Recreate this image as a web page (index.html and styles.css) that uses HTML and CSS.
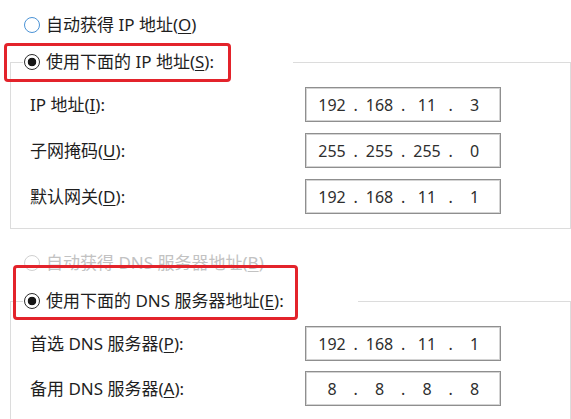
FILE: index.html
```html
<!DOCTYPE html>
<html lang="zh-CN">
<head>
<meta charset="utf-8">
<title>IP 设置</title>
<link rel="stylesheet" href="styles.css">
</head>
<body>
<div class="page">
  <div class="opt opt-top"><span class="radio radio-hover"></span><span class="opt-text">自动获得 IP 地址(<u>O</u>)</span></div>

  <fieldset class="group group-ip">
    <legend class="legend legend-ip"><div class="opt"><span class="radio radio-on"></span><span class="opt-text">使用下面的 IP 地址(<u>S</u>):</span></div></legend>
    <div class="rows rows-ip">
      <div class="row"><span class="label">IP 地址(<u>I</u>):</span>
        <div class="ip"><span>192</span><span>.</span><span>168</span><span>.</span><span>11</span><span>.</span><span>3</span></div></div>
      <div class="row"><span class="label">子网掩码(<u>U</u>):</span>
        <div class="ip"><span>255</span><span>.</span><span>255</span><span>.</span><span>255</span><span>.</span><span>0</span></div></div>
      <div class="row"><span class="label">默认网关(<u>D</u>):</span>
        <div class="ip"><span>192</span><span>.</span><span>168</span><span>.</span><span>11</span><span>.</span><span>1</span></div></div>
    </div>
  </fieldset>

  <div class="opt opt-dns-auto"><span class="radio radio-off"></span><span class="opt-text disabled">自动获得 DNS 服务器地址(<u>B</u>)</span></div>

  <fieldset class="group group-dns">
    <legend class="legend legend-dns"><div class="opt"><span class="radio radio-on"></span><span class="opt-text">使用下面的 DNS 服务器地址(<u>E</u>):</span></div></legend>
    <div class="rows rows-dns">
      <div class="row"><span class="label">首选 DNS 服务器(<u>P</u>):</span>
        <div class="ip"><span>192</span><span>.</span><span>168</span><span>.</span><span>11</span><span>.</span><span>1</span></div></div>
      <div class="row"><span class="label">备用 DNS 服务器(<u>A</u>):</span>
        <div class="ip"><span>8</span><span>.</span><span>8</span><span>.</span><span>8</span><span>.</span><span>8</span></div></div>
    </div>
  </fieldset>

  <div class="mark mark-ip"></div>
  <div class="mark mark-dns"></div>
</div>
</body>
</html>
```
FILE: styles.css
```css
html, body {
  margin: 0;
  padding: 0;
  background: #ffffff;
}

.page {
  position: relative;
  width: 571px;
  height: 419px;
  overflow: hidden;
  padding-top: 15px;
  box-sizing: border-box;
  font-family: "Noto Sans", "Noto Sans CJK SC", sans-serif;
  font-size: 17px;
  line-height: 20px;
  color: #1e1e1e;
}

u {
  text-decoration: underline;
  text-underline-offset: 2px;
  text-decoration-thickness: 1px;
}

.opt {
  display: flex;
  align-items: center;
  height: 20px;
  white-space: nowrap;
}

.opt-top {
  padding-left: 24px;
}

.opt-dns-auto {
  padding-left: 24px;
  margin-top: 24px;
}

.opt-text {
  margin-left: 6px;
}

.opt-text.disabled {
  color: #c2c2c2;
}

.radio {
  width: 16px;
  height: 16px;
  border-radius: 50%;
  box-sizing: border-box;
  flex: 0 0 auto;
}

.radio-hover {
  border: 1.5px solid #4b93d6;
  background: #fff;
}

.radio-on {
  border: 1px solid #2b2b2b;
  background: radial-gradient(circle, #161616 0 4px, #ffffff 4.6px);
}

.radio-off {
  border: 1px solid #d0d0d0;
  background: #fff;
}

.group {
  margin: 0 0 0 10px;
  padding: 0 0 0 12px;
  border: 1px solid #dcdcdc;
  min-inline-size: 0;
}

.group-ip {
  margin-top: 17px;
}

.group-dns {
  margin-top: 18px;
}

.legend {
  padding: 0;
  margin: 0;
  height: 20px;
  background: #fff;
}

.legend .opt {
  padding-left: 1px;
}

.legend-ip {
  width: 270px;
}

.legend-dns {
  width: 335px;
}

.rows {
  display: flex;
  flex-direction: column;
  padding-left: 7px;
}

.rows-ip {
  gap: 11px;
  padding-top: 15px;
  padding-bottom: 14px;
}

.rows-dns {
  gap: 10px;
  padding-top: 15px;
  padding-bottom: 30px;
}

.row {
  display: flex;
  align-items: center;
  height: 35px;
}

.label {
  flex: 0 0 275px;
  white-space: nowrap;
}

.ip {
  width: 196px;
  height: 35px;
  box-sizing: border-box;
  border: 1px solid #8f8f8f;
  box-shadow: inset 0 0 0 1px #d4d4d4;
  padding-left: 9px;
  display: grid;
  grid-template-columns: 34px 13.5px 34px 13.5px 34px 13.5px 34px;
  align-items: center;
  font-size: 16px;
  color: #2e2e2e;
}

.ip span {
  text-align: center;
}

.mark {
  position: absolute;
  border: 3px solid #e3232b;
  border-radius: 4px;
  box-sizing: border-box;
}

.mark-ip {
  left: 4px;
  top: 43px;
  width: 227px;
  height: 39px;
}

.mark-dns {
  left: 13px;
  top: 265px;
  width: 285px;
  height: 55px;
}
```
